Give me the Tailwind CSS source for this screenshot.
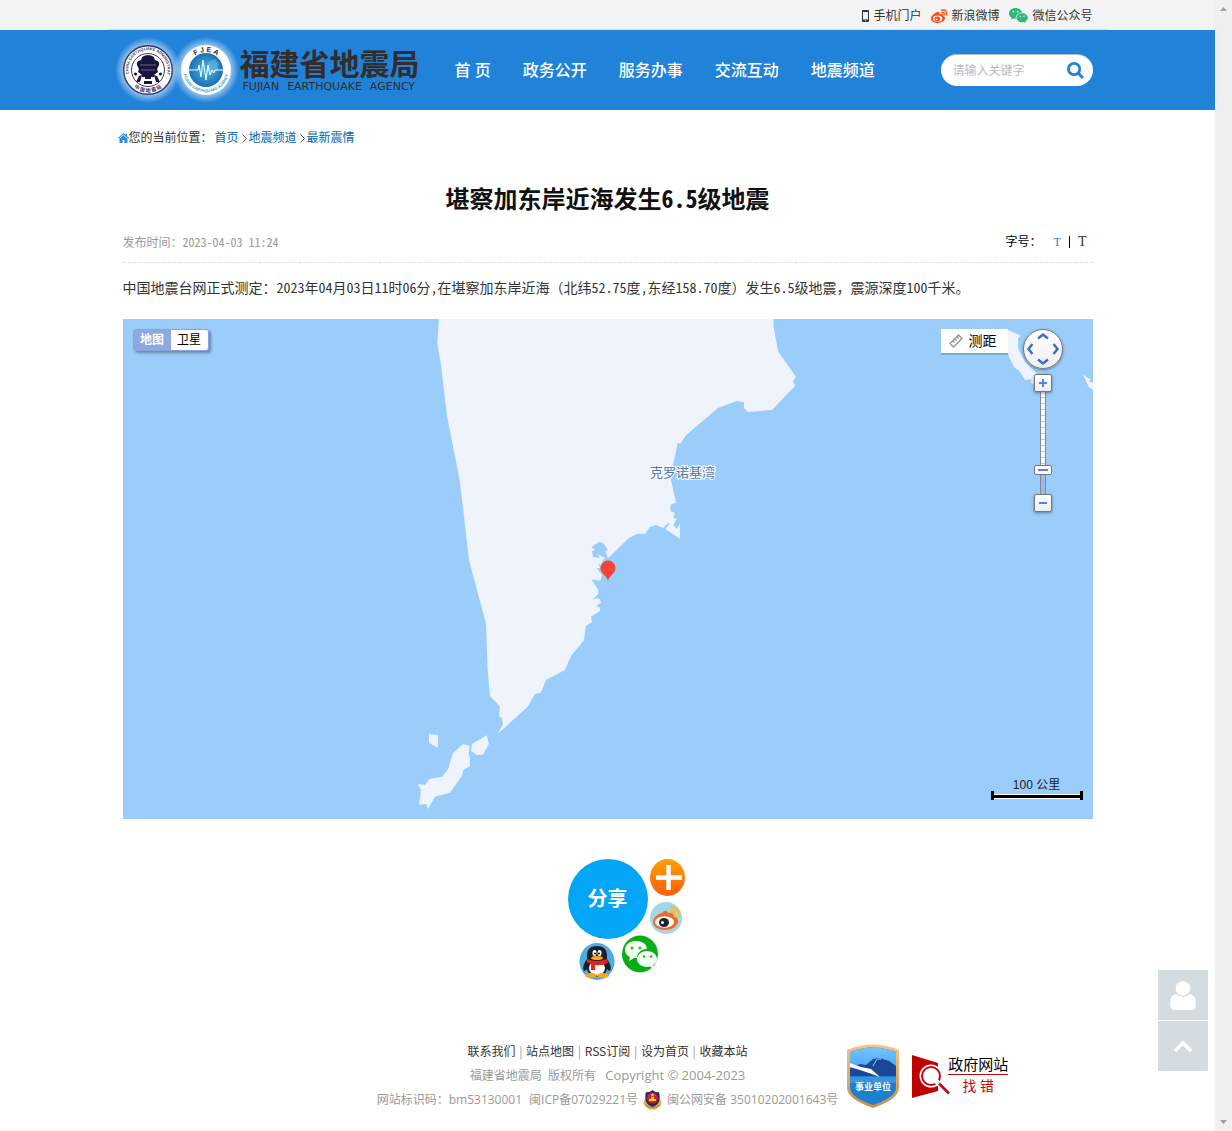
<!DOCTYPE html>
<html lang="zh-CN">
<head>
    <meta charset="UTF-8"/>
    <meta name="viewport" content="width=device-width, initial-scale=1.0"/>
    <title>堪察加东岸近海发生6.5级地震 - 福建省地震局</title>
    <script src="https://cdn.jsdelivr.net/npm/@tailwindcss/browser@4"></script>
</head>
<body class="flex min-h-screen bg-white font-['Open_Sans','Noto_Sans_CJK_SC',sans-serif] text-[12px] leading-[24px] text-[#333]">
<div class="min-w-0 flex-1">

    <!-- 顶部工具条 -->
    <div class="bg-[#f3f3f3]">
        <div class="mx-auto flex h-[30px] max-w-[1000px] items-center justify-end gap-[10px] border-b border-[#d3e1ee] px-[15px] pt-[2px]">
            <a href="#" class="flex items-center gap-1">
                <svg class="h-[12px] w-[7px]" viewBox="0 0 7 12"><path fill="#333" fill-rule="evenodd" d="M1 0h5q1 0 1 1v10q0 1-1 1H1q-1 0-1-1V1q0-1 1-1zM1 2v7.500h5V2zM3 10.200v1h1v-1z"/></svg>
                手机门户
            </a>
            <a href="#" class="flex items-center gap-[3px]">
                <svg class="h-[14px] w-[17px]" viewBox="0 0 17 14">
                    <path fill="#ff4a0b" d="M6.500 3C3.800 3.600 0 7 0 9.700 0 12.300 3.300 14 6.800 14c4.200 0 7.200-2.300 7.200-4.700 0-1.400-1-2-1.900-2.300.5-1.600-.6-2.600-3.500-1.500C8.900 4 8.300 2.700 6.500 3z"/>
                    <ellipse cx="6.600" cy="9.600" rx="4.700" ry="3.200" fill="#f3f3f3"/>
                    <ellipse cx="6.300" cy="9.900" rx="2.800" ry="2.400" fill="#ff4a0b"/>
                    <circle cx="5.700" cy="10.400" r=".9" fill="#f3f3f3"/>
                    <path d="M10.500 1.200c3.600-.9 6 1.600 5.200 5M11 3.600c1.700-.4 2.700.6 2.300 2" fill="none" stroke="#ff4a0b" stroke-width="1.300" stroke-linecap="round"/>
                </svg>
                新浪微博
            </a>
            <a href="#" class="flex items-center gap-1">
                <svg class="h-[15px] w-[19px]" viewBox="0 0 19 15">
                    <path fill="#2aba78" d="M6.500 0C2.900 0 0 2.400 0 5.400c0 1.800 1 3.200 2.500 4.200L2 11.500l2.300-1.100c.8.200 1.600.3 2.500.3C6.300 7.300 9 4.500 13 4.400 12.500 1.800 9.700 0 6.500 0z"/>
                    <path fill="#2aba78" d="M13 5.200c-3.100 0-5.500 2-5.500 4.500s2.400 4.500 5.500 4.500c.7 0 1.300-.1 1.900-.3l1.900 1-.5-1.700c1.500-.9 2.500-2 2.500-3.500 0-2.500-2.700-4.500-5.800-4.500z"/>
                    <g fill="#f3f3f3"><circle cx="4.400" cy="3.600" r=".9"/><circle cx="8.800" cy="3.600" r=".9"/><circle cx="11.300" cy="8.200" r=".7"/><circle cx="15" cy="8.200" r=".7"/></g>
                </svg>
                微信公众号
            </a>
        </div>
    </div>

    <!-- 头部导航 -->
    <header class="bg-[#2083d9]">
        <div class="mx-auto flex h-20 max-w-[1000px] items-center px-[15px]">
            <a href="#" class="flex shrink-0 items-center gap-[9px] text-[#332c2b]">
                <svg class="h-[50px] w-[108px] overflow-visible" viewBox="0 0 108 50">
                    <defs>
                        <radialGradient id="glow"><stop offset=".7" stop-color="#fff" stop-opacity=".6"/><stop offset="1" stop-color="#fff" stop-opacity="0"/></radialGradient>
                        <radialGradient id="globe"><stop offset="0" stop-color="#4db4e4"/><stop offset="1" stop-color="#1a72b4"/></radialGradient>
                        <path id="arcA" d="M6 29A19.500 19.500 0 1 1 44 29"/>
                        <path id="arcB" d="M4.500 34A22.500 22.500 0 0 0 45.500 34"/>
                        <path id="arcC" d="M65 25A18 18 0 0 1 101 25"/>
                        <path id="arcD" d="M60.500 29A23 23 0 0 0 105.500 29"/>
                    </defs>
                    <circle cx="25" cy="25" r="33" fill="url(#glow)"/>
                    <circle cx="83" cy="25" r="33" fill="url(#glow)"/>
                    <circle cx="25" cy="25" r="24.300" fill="#fff" stroke="#39365f" stroke-width="1.400"/>
                    <circle cx="25" cy="25" r="16.500" fill="#fff" stroke="#39365f"/>
                    <g fill="#171440">
                        <path d="M19 12q6-4 12 0l1 3q5 1 4 5l-2 4 1 3-4 3v2H19v-2l-4-3 1-3-2-4q-1-4 4-5z"/>
                        <circle cx="12.500" cy="29" r="1.600"/><circle cx="37.500" cy="29" r="1.600"/>
                        <path d="M16 31l3-1-2 7h-4zM34 31l-3-1 2 7h4zM22 32h6v2h-6zM21 36h8v3h-8z"/>
                    </g>
                    <path d="M17 20h16M18 25h14" stroke="#8d8ba8" stroke-width=".7"/>
                    <g fill="#39365f" font-family="Liberation Sans" font-weight="bold">
                        <text font-size="4"><textPath href="#arcA">CHINA EARTHQUAKE ADMINISTRATION</textPath></text>
                        <text font-size="5" text-anchor="middle" font-family="Noto Sans CJK SC"><textPath href="#arcB" startOffset="50%">中 国 地 震 局</textPath></text>
                    </g>
                    <circle cx="83" cy="25" r="25" fill="#fff"/>
                    <circle cx="83" cy="25" r="17" fill="url(#globe)"/>
                    <path d="M85 17l7-3 4 5-2 7-6 4-4-5z" fill="#72c7ea" opacity=".5"/>
                    <path d="M66 25h9l1-5 2 12 2-17 3 20 2-15 2 10 2-5 2 3 1-3h8" fill="none" stroke="#fff" stroke-linejoin="round"/>
                    <text font-family="Liberation Sans" font-weight="bold" font-size="7" text-anchor="middle" fill="#332c2b"><textPath href="#arcC" startOffset="50%">F J E A</textPath></text>
                    <text font-family="Liberation Sans" font-weight="bold" font-size="4" text-anchor="middle" fill="#2da0dc"><textPath href="#arcD" startOffset="50%">FUJIAN EARTHQUAKE AGENCY</textPath></text>
                </svg>
                <span class="flex flex-col">
                    <span class="text-[30px] leading-[32px] font-bold">福建省地震局</span>
                    <span class="flex gap-2 pl-[3px] font-['DejaVu_Sans',sans-serif] text-[11px] leading-[13px]"><span>FUJIAN</span><span>EARTHQUAKE</span><span>AGENCY</span></span>
                </span>
            </a>
            <nav class="ml-[19px] flex shrink-0 text-[16px] font-medium text-white">
                <a href="#" class="px-4">首&nbsp;页</a>
                <a href="#" class="px-4">政务公开</a>
                <a href="#" class="px-4">服务办事</a>
                <a href="#" class="px-4">交流互动</a>
                <a href="#" class="px-4">地震频道</a>
            </nav>
            <form class="ml-auto flex h-8 w-[152px] items-center rounded-full border-t border-[#b5bcc4] bg-white pr-[9px] pl-3">
                <input type="text" aria-label="关键字" placeholder="请输入关键字" class="min-w-0 flex-1 outline-none placeholder:text-[#bbb]"/>
                <button type="submit" aria-label="搜索">
                    <svg class="size-[17px]" viewBox="0 0 18 18" fill="none" stroke="#2083d9" stroke-width="3"><circle cx="7.500" cy="7.500" r="6"/><path d="M12 12l5 5"/></svg>
                </button>
            </form>
        </div>
    </header>

    <!-- 当前位置 -->
    <div class="mx-auto flex max-w-[1000px] items-center px-[10px] pt-4">
        <svg class="h-[10px] w-[11px]" viewBox="0 0 11 10" fill="#2d8ae0"><path d="M5.500 0L7.500 1.800V.8H9v2.300L11 5l-.7.800-4.800-4.300L.7 5.800 0 5z"/><path d="M5.500 2.200L9.500 5.800V10H6.500V7h-2v3h-3V5.800z"/></svg>
        <span class="mr-[2px]">您的当前位置：</span>
        <a href="#" class="pr-[3px] text-[#0066ad]">首页</a>
        <svg class="mr-[2px] h-[9px] w-[5px]" viewBox="0 0 5 9" fill="none" stroke="#555"><path d="M.5.500l4 4-4 4"/></svg>
        <a href="#" class="pr-[3px] text-[#0066ad]">地震频道</a>
        <svg class="mr-[2px] h-[9px] w-[5px]" viewBox="0 0 5 9" fill="none" stroke="#555"><path d="M.5.500l4 4-4 4"/></svg>
        <a href="#" class="text-[#0066ad]">最新震情</a>
    </div>

    <main class="mx-auto max-w-[1000px] px-[15px] pt-8">
        <h1 class="text-center font-['Noto_Sans_CJK_SC',sans-serif] text-[24px] leading-[32px] font-bold text-[#111]">堪察加东岸近海发生<span class="[font-feature-settings:'hwid']">6.5</span>级地震</h1>
        <div class="mt-4 flex h-[33px] items-start justify-between border-b border-dashed border-[#ddd]">
            <p class="font-['Noto_Sans_CJK_SC',sans-serif] text-[#999]">发布时间：<span class="[font-feature-settings:'hwid']">2023-04-03 11:24</span></p>
            <div class="flex items-center pr-[6px] text-black">
                <span class="mr-[12px]">字号：</span>
                <button type="button" class="font-['Liberation_Serif',serif] text-[12px] text-[#2083d9]">T</button>
                <span class="mx-[8px] h-3 w-px bg-black"></span>
                <button type="button" class="font-['Liberation_Serif',serif] text-[14px] text-[#333]">T</button>
            </div>
        </div>

        <p class="pt-3 font-['Noto_Sans_CJK_SC',sans-serif] text-[14px] [&>span]:[font-feature-settings:'hwid']">中国地震台网正式测定：<span>2023</span>年<span>04</span>月<span>03</span>日<span>11</span>时<span>06</span>分<span>,</span>在堪察加东岸近海（北纬<span>52.75</span>度<span>,</span>东经<span>158.70</span>度）发生<span>6.5</span>级地震，震源深度<span>100</span>千米。</p>

        <!-- 震中地图 -->
        <div class="relative mt-5 h-[500px] overflow-hidden bg-[#9acdfa]">
            <svg class="h-full w-full" viewBox="0 0 970 500" preserveAspectRatio="xMidYMid slice">
                <g fill="#eff3fc" transform="translate(277 -9) scale(.33333)">
                    <path d="M117 20L112 100 123 165 141 318 179 510 190 600 207 750 239 870 258 940 263 1080 270 1158 300 1190 297 1218 306 1224 309 1243 292 1273 383 1190 405 1152 423 1148 438 1110 495 1080 513 1038 552 991 557 948 576 936 573 920 600 903 600 893 588 888 603 878 600 868 592 864 577 871 595 852 594 838 574 808 601 812 606 795 590 775 600 773 596 760 602 766 614 742 592 734 600 744 579 741 576 724 585 720 574 711 596 696 610 699 624 721 616 723 624 745 687 684 711 672 735 671 750 651 768 645 789 654 805 639 809 641 796 657 840 686 840 642 830 657 820 645 831 626 820 624 825 608 814 605 810 594 814 582 828 578 813 510 819 465 834 397 840 403 858 376 954 294 1010 273 1032 276 1032 294 1044 306 1116 300 1185 228 1179 213 1188 201 1134 123 1120 45 1121 20z"/>
                    <path d="M87 1272L114 1275 114 1313 87 1299z"/>
                    <path d="M260 1276L267 1301 249 1334 228 1334 213 1322 216 1302z"/>
                    <path d="M189 1302L210 1307 205 1331 210 1343 210 1368 190 1380 186 1397 150 1448 105 1460 84 1497 79 1482 57 1484 63 1441 54 1422 75 1425 88 1407 126 1400 144 1378 159 1329z"/>
                </g>
                <g fill="#eff3fc" transform="translate(777 -94) scale(.33333)">
                    <path d="M306 310L325 315 362 332 354 340 354 370 375 410 410 445 405 480 393 472 395 462 375 465 360 440 342 425 327 395 324 380 306 330z"/>
                    <path d="M549 449L572 463 568 470 579 472 579 495 566 485 558 468z"/>
                </g>
                <text x="527" y="158" font-family="Noto Sans CJK SC" font-size="13" fill="#4a74b4" stroke="#fff" stroke-width="2" paint-order="stroke">克罗诺基湾</text>
                <path fill="#f84437" d="M485 261.500c-2-5.500-7.500-7-7.500-12.500a7.500 7.500 0 0 1 15 0c0 5.500-5.500 7-7.500 12.500z"/>
            </svg>

            <div class="absolute top-[10px] left-[10px] flex rounded-[3px] border border-[#8ba4dc] bg-white leading-[20px] text-black shadow-[2px_2px_3px_rgba(0,0,0,0.35)]">
                <button type="button" class="w-[37px] bg-[#8ea8e0] font-bold text-white">地图</button>
                <button type="button" class="w-[37px]">卫星</button>
            </div>

            <button type="button" class="absolute top-[10px] right-[85px] flex h-6 w-[67px] items-center gap-[6px] bg-white pl-2 text-[14px] text-black shadow-[0_2px_0_rgba(90,130,175,0.5)]">
                <svg class="size-[14px]" viewBox="0 0 14 14" fill="none" stroke="#999" stroke-width="1.500"><path d="M1 9.500L9.500 1 13 4.500 4.500 13zM4 7l1.500 1.500M6 5l1.500 1.500M8 3l1.500 1.500"/></svg>
                测距
            </button>

            <div class="absolute top-[10px] right-[30px] flex w-10 flex-col items-center">
                <button type="button" aria-label="平移" class="size-10 rounded-full border border-[#777] bg-linear-to-b from-white to-[#eee] shadow-[0_1px_3px_rgba(0,0,0,0.4)]">
                    <svg class="size-full" viewBox="0 0 38 38" fill="none" stroke="#3b6bd2" stroke-width="2.400"><path d="M14 8.500l5-4 5 4M14 29.500l5 4 5-4M8.500 14l-4 5 4 5M29.500 14l4 5-4 5"/></svg>
                </button>
                <button type="button" aria-label="放大" class="z-10 mt-[5px] flex size-[18px] items-center justify-center rounded-[2px] border border-[#777] bg-linear-to-b from-white to-[#eee] shadow-[0_1px_3px_rgba(0,0,0,0.4)]">
                    <svg class="size-2" viewBox="0 0 8 8" stroke="#4f83ea" stroke-width="2"><path d="M0 4h8M4 0v8"/></svg>
                </button>
                <div class="relative h-[102px] w-[18px]">
                    <svg class="h-full w-full" viewBox="0 0 18 102">
                        <path d="M6.500 0v102h5V0" fill="#f8f8f8" stroke="#888"/>
                        <path d="M7 78h4v24H7z" fill="#9db6f5"/>
                        <path d="M7 5.500h4m-4 6h4m-4 6h4m-4 6h4m-4 6h4m-4 6h4m-4 6h4m-4 6h4m-4 6h4m-4 6h4m-4 6h4m-4 6h4m-4 12h4m-4 6h4" stroke="#aaa" stroke-opacity=".6"/>
                    </svg>
                    <input type="range" min="0" max="100" value="79" aria-label="缩放级别"
                           class="absolute inset-0 h-full w-[18px] appearance-none bg-transparent [writing-mode:vertical-lr] [&::-webkit-slider-thumb]:h-[10px] [&::-webkit-slider-thumb]:w-[18px] [&::-webkit-slider-thumb]:appearance-none [&::-webkit-slider-thumb]:rounded-[2px] [&::-webkit-slider-thumb]:border [&::-webkit-slider-thumb]:border-[#777] [&::-webkit-slider-thumb]:bg-[linear-gradient(#4f83ea,#4f83ea)] [&::-webkit-slider-thumb]:bg-[length:10px_2px] [&::-webkit-slider-thumb]:bg-center [&::-webkit-slider-thumb]:bg-no-repeat [&::-webkit-slider-thumb]:bg-white"/>
                </div>
                <button type="button" aria-label="缩小" class="flex size-[18px] items-center justify-center rounded-[2px] border border-[#777] bg-linear-to-b from-white to-[#eee] shadow-[0_1px_3px_rgba(0,0,0,0.4)]">
                    <svg class="size-2" viewBox="0 0 8 8" stroke="#4f83ea" stroke-width="2"><path d="M0 4h8"/></svg>
                </button>
            </div>

            <div class="absolute right-[10px] bottom-[19px] w-[92px] text-center font-['Liberation_Sans','Noto_Sans_CJK_SC',sans-serif] leading-[10px] text-[#222]">
                100 公里
                <svg class="h-[10px] w-full" viewBox="0 0 92 10"><path d="M2 6.500h88" stroke="#fff" stroke-width="5"/><path d="M1.500 1v9M90.500 1v9M2 6.500h88" stroke="#000" stroke-width="3"/></svg>
            </div>
        </div>

        <!-- 分享 -->
        <div class="relative mx-auto mt-10 h-[122px] w-20">
            <button type="button" class="size-20 rounded-full bg-[#03a5f7] font-['Liberation_Serif','Noto_Sans_CJK_SC',serif] text-[20px] font-bold text-white">分享</button>
            <a href="#" aria-label="更多" class="absolute top-0 left-[82px]">
                <svg class="h-[37px] w-[35px]" viewBox="0 0 35 37">
                    <defs><linearGradient id="plus" x2="0" y2="1"><stop stop-color="#ffa200"/><stop offset="1" stop-color="#ff5a10"/></linearGradient></defs>
                    <ellipse cx="17.500" cy="18.500" rx="17.500" ry="18.500" fill="url(#plus)"/><path d="M6 18.500h26M18.500 6v25" stroke="#fff" stroke-width="4.500"/>
                </svg>
            </a>
            <a href="#" aria-label="新浪微博" class="absolute top-[43px] left-[82px]">
                <svg class="size-8" viewBox="0 0 32 32">
                    <circle cx="16" cy="16" r="16" fill="#a3d6e6"/>
                    <path d="M12 11C7 12 3 16 3 20c0 5 6 8 12 8 7 0 13-4 13-9 0-2-1-4-3-4 0-4-3-5-7-4-1-3-4-3-6 0z" fill="#f2692c"/>
                    <ellipse cx="14.500" cy="20" rx="9.500" ry="5.800" fill="#fff"/><ellipse cx="14" cy="20.500" rx="5" ry="4.500" fill="#222"/><circle cx="12.500" cy="20.500" r="1.500" fill="#fff"/>
                    <path d="M21 5q8 1 8 10M20 9q5 0 5 6" fill="none" stroke="#eac33c" stroke-width="2.400"/>
                </svg>
            </a>
            <a href="#" aria-label="微信" class="absolute top-[76px] left-[54px]">
                <svg class="h-[38px] w-[36px]" viewBox="0 0 36 38">
                    <ellipse cx="18" cy="19" rx="18" ry="18.500" fill="#09ae17"/>
                    <path d="M14 6C7 6 3 10 3 15c0 3 2 6 5 7l-1 4 5-3h3c0-5 4-9 10-9 0-5-5-8-11-8z" fill="#f3fff1"/>
                    <path d="M25 16c-6 0-10 4-10 8s4 8 10 8l3-.5 4 2.500-1-4c2-1 4-3 4-6 0-4-4-8-10-8z" fill="#f3fff1"/>
                    <g fill="#37b437"><circle cx="10" cy="13" r="1.500"/><circle cx="18" cy="13" r="1.500"/><circle cx="22" cy="21.500" r="1.300"/><circle cx="29" cy="21.500" r="1.300"/></g>
                </svg>
            </a>
            <a href="#" aria-label="QQ" class="absolute top-[84px] left-[11px]">
                <svg class="h-[37px] w-[36px]" viewBox="0 0 36 37">
                    <ellipse cx="18" cy="18.500" rx="17.500" ry="18.500" fill="#4dabe2"/>
                    <path d="M18 3c-7 0-10 4-10 9v4c-3 4-5 9-3 12 1 0 2-1 3-2 1 5 5 8 10 8s9-3 10-8c1 1 2 2 3 2 2-3 0-8-3-12v-4c0-5-3-9-10-9z" fill="#1c1f2a"/>
                    <ellipse cx="18" cy="25" rx="8" ry="7" fill="#fff"/>
                    <g fill="#f5a81c"><ellipse cx="12" cy="32.500" rx="6" ry="2.500"/><ellipse cx="24" cy="32.500" rx="6" ry="2.500"/><ellipse cx="18" cy="15" rx="6" ry="2"/></g>
                    <ellipse cx="15.500" cy="10" rx="2" ry="3" fill="#fff"/><ellipse cx="20.500" cy="10" rx="2" ry="3" fill="#fff"/><circle cx="16" cy="10.500" r="1"/><circle cx="20" cy="10.500" r="1"/>
                    <path d="M8 16q10 4 20 0l1 4q-6 3-13 2v5h-4v-6l-4-2z" fill="#e2241b"/>
                </svg>
            </a>
        </div>
    </main>

    <footer class="mt-[58px] grid grid-cols-[1fr_auto_1fr] pb-[18px] text-[#999]">
        <div class="col-start-2 text-center">
            <p class="font-['Noto_Sans_CJK_SC',sans-serif] [&>a]:px-px [&>a]:text-[#333]"><a href="#">联系我们</a> | <a href="#">站点地图</a> | <a href="#">RSS订阅</a> | <a href="#">设为首页</a> | <a href="#">收藏本站</a></p>
            <p>福建省地震局&nbsp; 版权所有 &nbsp; <span class="text-[13px]">Copyright © 2004-2023</span></p>
            <p class="flex items-center justify-center">
                <span class="mr-[7px]">网站标识码：bm53130001</span>
                <a href="#">闽ICP备07029221号</a>
                <svg class="mx-[5px] h-5 w-[19px]" viewBox="0 0 19 20">
                    <path d="M2 9q-3 4 0 7l4 3.500h7l4-3.500q3-3 0-7z" fill="#e3b04c"/>
                    <path d="M3 2q3 1 6.500-2Q13 3 16 2q3 12-6.500 15Q0 14 3 2z" fill="#232a69"/>
                    <circle cx="9.500" cy="8" r="5.500" fill="#d92219"/>
                    <path d="M6 9h7v2H6zM8 7h3v2H8zM9.500 3l.6 1.300 1.400.1-1 1 .3 1.300-1.300-.7-1.300.7.3-1.300-1-1 1.400-.1z" fill="#f4c950"/>
                    <path d="M2 15q7.500 5 15 0" stroke="#b77b22" fill="none"/>
                </svg>
                <a href="#">闽公网安备 35010202001643号</a>
            </p>
        </div>
        <div class="flex items-center gap-[13px] pl-[9px]">
            <a href="#" class="shrink-0">
                <svg class="h-16 w-[52px]" viewBox="0 0 52 64">
                    <defs>
                        <linearGradient id="rim" x2="0" y2="1"><stop stop-color="#f6c585"/><stop offset="1" stop-color="#ca8e4c"/></linearGradient>
                        <linearGradient id="sky" x2="0" y2="1"><stop stop-color="#78c3ff"/><stop offset="1" stop-color="#36a0f1"/></linearGradient>
                    </defs>
                    <path d="M0 6Q26-5 52 6v38q0 11-26 20Q0 55 0 44z" fill="url(#rim)"/>
                    <path d="M3 8q23-9 46 0v36q0 9-23 17Q3 53 3 44z" fill="#1c80ce"/>
                    <path d="M3 8q23-9 46 0v24H3z" fill="url(#sky)"/>
                    <path d="M3 33h46v6H3z" fill="#3c93dd"/>
                    <path d="M3 24l10-4 6 1 7-6 5-1 5 1 6 2 7 5v10H3z" fill="#1c4799"/>
                    <path d="M3 19l11 4 10 2 9 8-11-4-9-3-10-3z" fill="#fff"/><path d="M26 22l4-7h4" stroke="#87ccff" fill="none"/>
                    <text x="26" y="46" text-anchor="middle" font-family="Noto Sans CJK SC" font-weight="bold" font-size="9" fill="#fff">事业单位</text>
                </svg>
            </a>
            <a href="#" class="flex shrink-0 items-center">
                <svg class="h-[44px] w-[36px] overflow-visible" viewBox="0 0 36 44">
                    <path d="M0 1l26 8v28L0 44z" fill="#be0000"/>
                    <circle cx="19" cy="22" r="11.500" fill="#fff"/><circle cx="19" cy="22" r="9" fill="none" stroke="#c4060e" stroke-width="2"/>
                    <path d="M24 27l13 13" stroke="#fff" stroke-width="5"/><path d="M27 29.500l10 10" stroke="#c20b12" stroke-width="2.600"/>
                </svg>
                <span class="flex flex-col items-center text-black">
                    <span class="border-b border-[#c4060e] text-[15px] leading-[20px]">政府网站</span>
                    <span class="text-[14px] leading-[22px] text-[#c4060e]">找 错</span>
                </span>
            </a>
        </div>
    </footer>
</div>

<!-- 右侧浮动按钮 -->
<div class="fixed right-6 bottom-[60px] flex flex-col gap-px">
    <a href="#" aria-label="个人中心" class="flex size-[50px] items-center justify-center bg-[#d4dbe1]">
        <svg class="h-[29px] w-[26px]" viewBox="0 0 26 29" fill="#fff"><circle cx="13" cy="7.500" r="7.300"/><path d="M6 13q7 6 14 0 6 1 6 10 0 6-5 6H5q-5 0-5-6 0-9 6-10z"/></svg>
    </a>
    <a href="#" aria-label="返回顶部" class="flex size-[50px] items-center justify-center bg-[#d4dbe1]">
        <svg class="h-[12px] w-[18px]" viewBox="0 0 18 12" fill="none" stroke="#fff" stroke-width="3.400"><path d="M1 11l8-8 8 8"/></svg>
    </a>
</div>

<!-- 滚动条 -->
<div class="sticky top-0 flex h-screen w-[17px] shrink-0 flex-col items-center justify-between bg-[#f0f0f0] py-[7px]">
    <svg class="h-1 w-[7px]" viewBox="0 0 7 4" fill="#a0a0a0"><path d="M0 4l3.500-4L7 4z"/></svg>
    <svg class="h-1 w-[7px]" viewBox="0 0 7 4" fill="#a0a0a0"><path d="M0 0l3.500 4L7 0z"/></svg>
</div>
</body>
</html>
